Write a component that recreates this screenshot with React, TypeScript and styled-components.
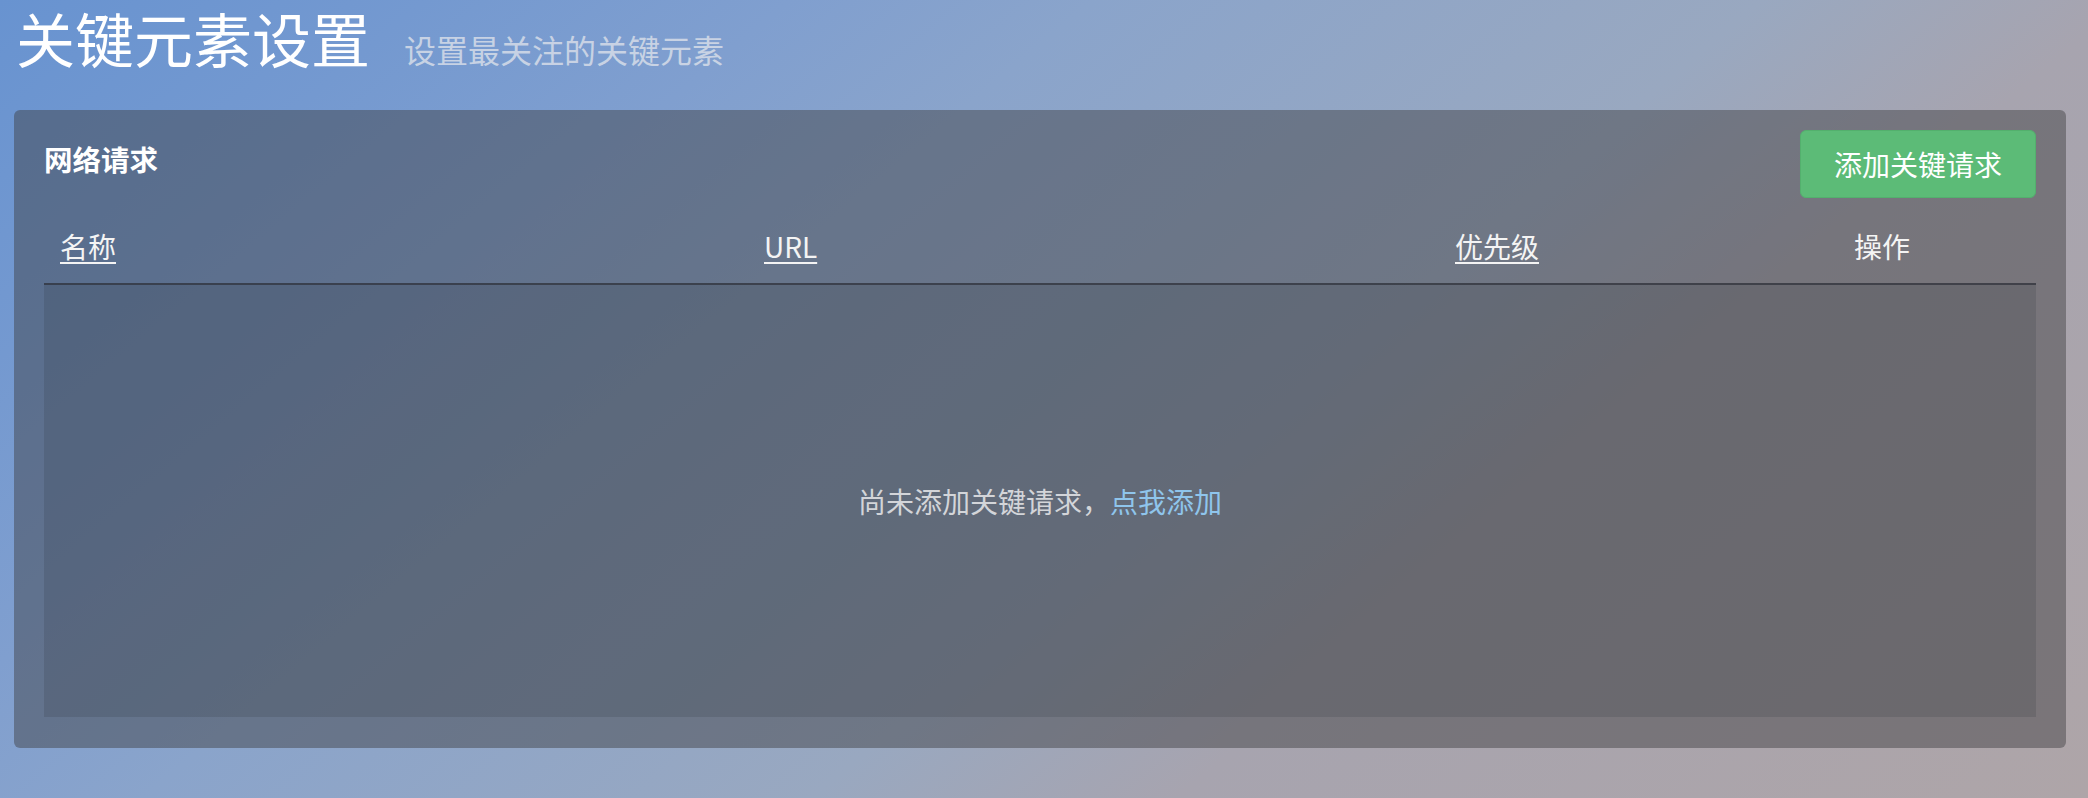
import React from "react";
import styled, { createGlobalStyle } from "styled-components";

const GlobalStyle = createGlobalStyle`
  html, body {
    margin: 0;
    padding: 0;
  }
  body {
    min-height: 798px;
    font-family: "Noto Sans CJK SC", "Noto Sans", sans-serif;
    background: linear-gradient(
      140deg,
      #6893d0 0%,
      #7499d0 14%,
      #809fcf 26%,
      #8aa4cb 36%,
      #99a8c0 58%,
      #a7a4af 70%,
      #aea5a8 100%
    );
    background-attachment: fixed;
  }
`;

const Page = styled.div`
  min-height: 798px;
  padding: 0 22px 0 14px;
  box-sizing: border-box;
`;

const Header = styled.header`
  display: flex;
  align-items: baseline;
  gap: 34px;
  height: 110px;
  padding-left: 2px;
`;

const Title = styled.h1`
  margin: 0;
  font-size: 59px;
  line-height: 76px;
  font-weight: 400;
  color: #ffffff;
`;

const Subtitle = styled.span`
  font-size: 32px;
  color: rgba(222, 226, 234, 0.78);
`;

const Panel = styled.section`
  background: rgba(60, 60, 62, 0.45);
  border-radius: 6px;
  padding: 20px 30px 31px 30px;
`;

const PanelHead = styled.div`
  display: flex;
  justify-content: space-between;
  align-items: flex-start;
`;

const PanelTitle = styled.h2`
  margin: 0;
  font-size: 28.5px;
  line-height: 58px;
  font-weight: 700;
  color: #ffffff;
`;

const AddButton = styled.button`
  width: 236px;
  height: 68px;
  box-sizing: border-box;
  border: 1px solid #53b06d;
  border-radius: 6px;
  background: #5cbb77;
  color: #ffffff;
  font-family: inherit;
  font-size: 28px;
  cursor: pointer;
  padding: 0;
`;

const Table = styled.div`
  margin-top: 20px;
`;

const HeadRow = styled.div`
  display: grid;
  grid-template-columns: 704px 691px 289px 1fr;
  border-bottom: 2px solid rgba(45, 48, 56, 0.75);
`;

const HeadCell = styled.div<{ $center?: boolean; $sortable?: boolean }>`
  padding: 8px 16px 17px 16px;
  font-size: 28px;
  line-height: 40px;
  color: #f4f4f4;
  text-align: ${(p) => (p.$center ? "center" : "left")};
  text-decoration: ${(p) => (p.$sortable ? "underline" : "none")};
  text-underline-offset: 4px;
  text-decoration-thickness: 1.5px;
`;

const Body = styled.div`
  height: 432px;
  background: rgba(40, 42, 48, 0.16);
  display: flex;
  align-items: center;
  justify-content: center;
`;

const EmptyText = styled.p`
  margin: 0;
  font-size: 28px;
  line-height: 40px;
  color: #d3d5d9;
`;

const EmptyLink = styled.a`
  color: #8fc5ec;
  text-decoration: none;
  cursor: pointer;
`;

export default function App() {
  return (
    <>
      <GlobalStyle />
      <Page>
        <Header>
          <Title>关键元素设置</Title>
          <Subtitle>设置最关注的关键元素</Subtitle>
        </Header>
        <Panel>
          <PanelHead>
            <PanelTitle>网络请求</PanelTitle>
            <AddButton>添加关键请求</AddButton>
          </PanelHead>
          <Table>
            <HeadRow>
              <HeadCell $sortable>名称</HeadCell>
              <HeadCell $sortable>URL</HeadCell>
              <HeadCell $sortable>优先级</HeadCell>
              <HeadCell $center>操作</HeadCell>
            </HeadRow>
            <Body>
              <EmptyText>
                尚未添加关键请求，<EmptyLink>点我添加</EmptyLink>
              </EmptyText>
            </Body>
          </Table>
        </Panel>
      </Page>
    </>
  );
}
